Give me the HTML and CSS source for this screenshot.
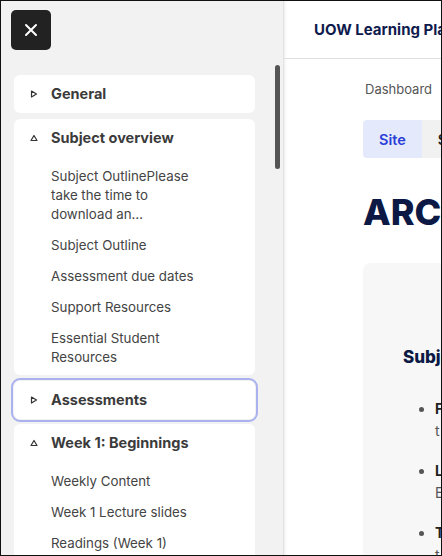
FILE: index.html
```html
<!DOCTYPE html>
<html lang="en">
<head>
<meta charset="utf-8">
<title>ARCH Subject</title>
<link rel="stylesheet" href="styles.css">
</head>
<body>
<div class="frame">
  <aside class="drawer">
    <div class="drawer-top">
      <button class="close" aria-label="Close course index">
        <svg width="14" height="14" viewBox="0 0 14 14"><path d="M2 2L12 12M12 2L2 12" stroke="#fff" stroke-width="2" stroke-linecap="round"/></svg>
      </button>
    </div>
    <nav class="sections">
      <section class="card">
        <div class="card-head">
          <svg class="tri" width="8" height="8" viewBox="0 0 8 8"><path d="M1.5 1L6.5 4L1.5 7Z" fill="none" stroke="#333" stroke-width="1.2" stroke-linejoin="round"/></svg>
          <span>General</span>
        </div>
      </section>
      <section class="card">
        <div class="card-head">
          <svg class="tri" width="8" height="8" viewBox="0 0 8 8"><path d="M1 6.5L4 1.5L7 6.5Z" fill="none" stroke="#333" stroke-width="1.2" stroke-linejoin="round"/></svg>
          <span>Subject overview</span>
        </div>
        <ul class="items">
          <li class="item">Subject OutlinePlease<br>take the time to<br>download an…</li>
          <li class="item">Subject Outline</li>
          <li class="item">Assessment due dates</li>
          <li class="item">Support Resources</li>
          <li class="item">Essential Student Resources</li>
        </ul>
      </section>
      <section class="card active">
        <div class="card-head">
          <svg class="tri" width="8" height="8" viewBox="0 0 8 8"><path d="M1.5 1L6.5 4L1.5 7Z" fill="none" stroke="#333" stroke-width="1.2" stroke-linejoin="round"/></svg>
          <span>Assessments</span>
        </div>
      </section>
      <section class="card">
        <div class="card-head">
          <svg class="tri" width="8" height="8" viewBox="0 0 8 8"><path d="M1 6.5L4 1.5L7 6.5Z" fill="none" stroke="#333" stroke-width="1.2" stroke-linejoin="round"/></svg>
          <span>Week 1: Beginnings</span>
        </div>
        <ul class="items">
          <li class="item">Weekly Content</li>
          <li class="item">Week 1 Lecture slides</li>
          <li class="item">Readings (Week 1)</li>
        </ul>
      </section>
    </nav>
    <div class="thumb"></div>
  </aside>
  <main class="page">
    <header class="topbar"><span class="brand">UOW Learning Platform</span></header>
    <div class="content">
      <div class="crumbs">Dashboard</div>
      <div class="tabs">
        <span class="tab active">Site</span>
        <span class="tab">Settings</span>
      </div>
      <h1 class="title">ARCH</h1>
      <div class="box">
        <h2 class="box-title">Subject</h2>
        <ul class="facts">
          <li><strong>F</strong><br>t</li>
          <li><strong>L</strong><br>E</li>
          <li><strong>T</strong><br>t</li>
        </ul>
      </div>
    </div>
  </main>
</div>
</body>
</html>
```

FILE: styles.css
```css
* { box-sizing: border-box; }
html, body { margin: 0; padding: 0; }
body {
  width: 442px;
  height: 556px;
  overflow: hidden;
  font-family: "Inter", "Noto Sans", sans-serif;
  color: #444;
}
.frame {
  display: flex;
  width: 442px;
  height: 556px;
  border: 1px solid #111;
  overflow: hidden;
  background: #fff;
}
.drawer {
  position: relative;
  flex: 0 0 283px;
  height: 100%;
  background: #f2f2f2;
  border-right: 1px solid #e2e2e2;
  padding: 9px 0 0 10px;
  overflow: hidden;
}
.close {
  width: 40px;
  height: 40px;
  border: 0;
  border-radius: 5px;
  background: #222;
  display: flex;
  align-items: center;
  justify-content: center;
  padding: 0;
}
.sections {
  margin: 25px 0 0 3px;
  width: 241px;
  display: flex;
  flex-direction: column;
  gap: 6px;
}
.card {
  background: #fff;
  border-radius: 6px;
}
.card.active {
  outline: 2px solid #a9b2ee;
  outline-offset: 1px;
  margin-bottom: -1px;
}
.card-head {
  height: 38px;
  display: flex;
  align-items: center;
  padding: 0 0 1px 16px;
  font-size: 14.5px;
  font-weight: 700;
  color: #3b3b3b;
}
.tri { flex: 0 0 8px; margin-right: 13px; }
.items {
  list-style: none;
  margin: 0;
  padding: 4px 0 2px;
}
.item {
  padding: 6px 44px 6px 37px;
  font-size: 13.3px;
  line-height: 19px;
  color: #444;
}
.thumb {
  position: absolute;
  left: 274px;
  top: 64px;
  width: 5px;
  height: 104px;
  border-radius: 3px;
  background: #555;
}
.page {
  flex: 1 1 auto;
  min-width: 0;
  height: 100%;
  overflow: hidden;
  box-shadow: inset 3px 0 3px -2px rgba(0,0,0,0.08);
}
.topbar {
  height: 58px;
  border-bottom: 1px solid #e0e0e0;
  display: flex;
  align-items: center;
  padding-left: 30px;
  white-space: nowrap;
}
.brand {
  font-size: 15px;
  font-weight: 700;
  color: #0f1b4d;
}
.content {
  padding: 21px 0 0 79px;
  white-space: nowrap;
}
.crumbs {
  font-size: 13px;
  line-height: 18px;
  color: #555;
  padding-left: 2px;
}
.tabs {
  margin-top: 22px;
  display: flex;
  height: 38px;
}
.tab {
  display: flex;
  align-items: center;
  padding: 0 16px;
  background: #f1f1f1;
  font-size: 14.5px;
  font-weight: 600;
  color: #222;
}
.tab.active {
  background: #e5e9fc;
  color: #2a3fd6;
  border-radius: 4px 0 0 4px;
  width: 59px;
  justify-content: center;
}
.title {
  margin: 34px 0 0;
  font-size: 36px;
  line-height: 40px;
  font-weight: 800;
  color: #0b1944;
}
.box {
  margin-top: 31px;
  background: #f7f7f7;
  border-radius: 8px;
  padding: 82px 0 40px 40px;
  width: 500px;
}
.box-title {
  margin: 0;
  font-size: 17px;
  line-height: 24px;
  font-weight: 800;
  color: #0b1944;
}
.facts {
  margin: 29px 0 0;
  padding-left: 32px;
  color: #555;
}
.facts li {
  font-size: 14px;
  line-height: 22px;
  margin-bottom: 18px;
}
.facts strong { color: #222; }
```
